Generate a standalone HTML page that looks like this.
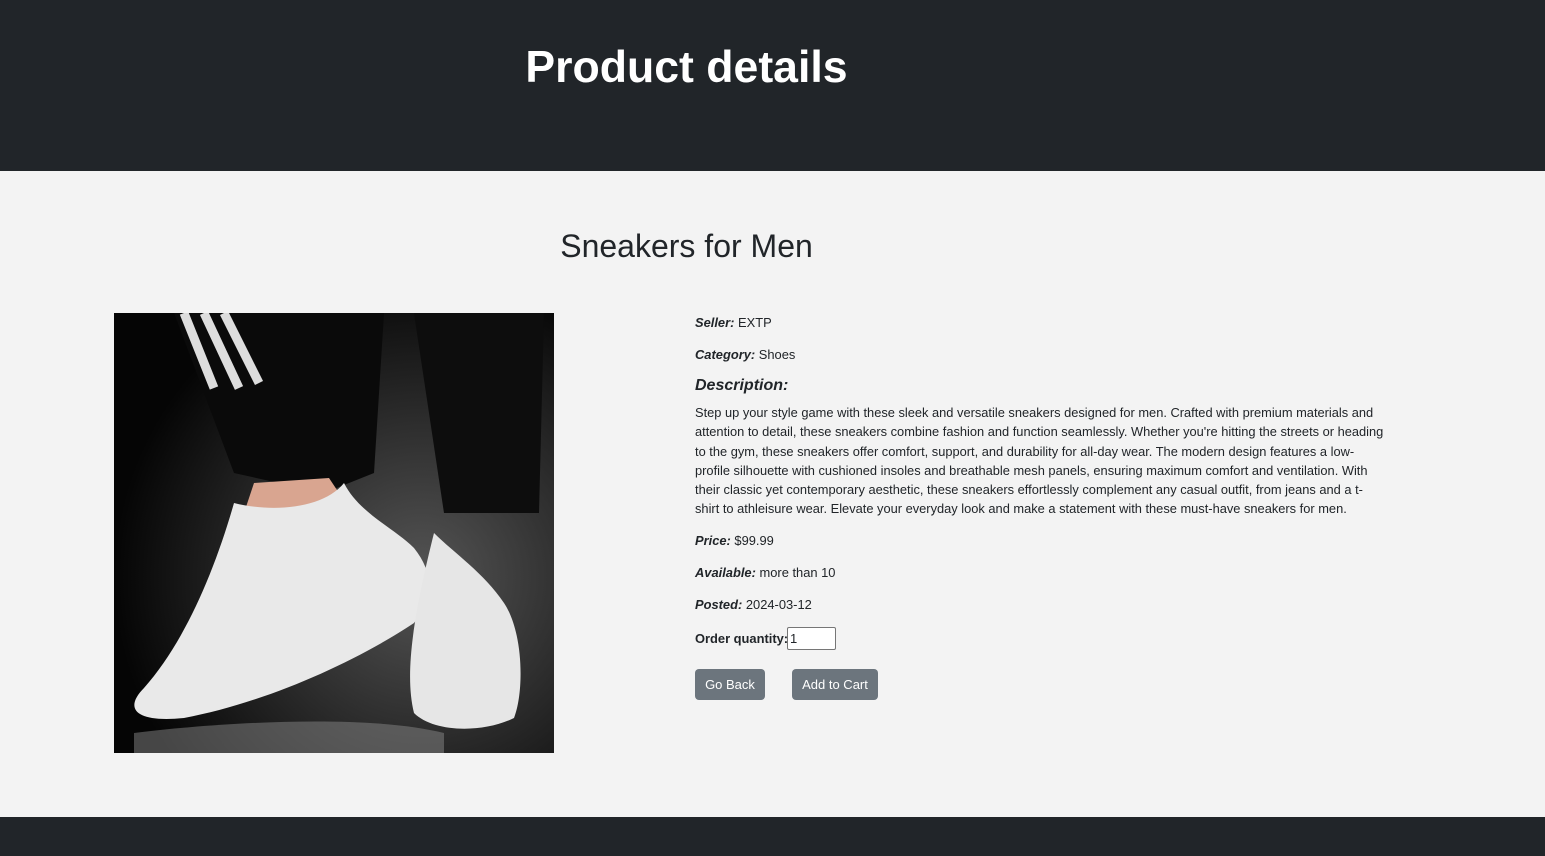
<!DOCTYPE html>
<html><head><style>
body{margin:0;background:#f3f3f3;font-family:"Liberation Sans",sans-serif;color:#212529;width:1545px;height:856px;overflow:hidden;position:relative}
header{position:absolute;left:0;top:0;width:1545px;height:171px;background:#212529}
header h1{position:absolute;left:0;width:1373px;text-align:center;top:43px;margin:0;color:#fff;font-size:44.6px;font-weight:bold}
h2{position:absolute;left:0;width:1373px;text-align:center;top:228px;margin:0;font-weight:normal;font-size:32px}
.img{position:absolute;left:114px;top:313px;width:440px;height:440px;background:#111;overflow:hidden}
.info{position:absolute;left:695px;top:313px;width:690px;font-size:12.9px;line-height:19.2px}
.info p{margin:0}
b i,i b{font-weight:bold}
.desc{font-size:12.85px;line-height:19.25px}
.btn{position:absolute;top:669px;height:31px;background:#6c757d;color:#fff;border-radius:4px;font-size:13px;line-height:31px;text-align:center}
footer{position:absolute;left:0;top:817px;width:1545px;height:39px;background:#212529}
</style></head><body>
<header><h1>Product details</h1></header>
<h2>Sneakers for Men</h2>
<div class="img"><svg width="440" height="440" viewBox="0 0 440 440">
<defs><radialGradient id="g" cx="0.7" cy="0.6" r="0.7"><stop offset="0" stop-color="#555"/><stop offset="1" stop-color="#050505"/></radialGradient></defs>
<rect width="440" height="440" fill="url(#g)"/>
<path d="M60 0 L270 0 L260 160 L210 180 L120 160 Z" fill="#0a0a0a"/>
<path d="M300 0 L430 0 L425 200 L330 200 Z" fill="#0d0d0d"/>
<path d="M70 0 L100 75 M90 0 L125 75 M110 0 L145 70" stroke="#ddd" stroke-width="9"/>
<path d="M140 170 L215 165 L225 180 L215 200 L130 200 Z" fill="#d9a590"/>
<path d="M120 190 C160 200 210 195 230 170 C245 200 280 215 300 235 C320 260 320 285 300 310 C240 350 150 390 70 405 C20 410 10 395 30 375 C70 330 100 260 120 190Z" fill="#e9e9e9"/>
<path d="M320 220 C340 240 370 260 390 290 C410 320 410 380 400 405 C370 420 320 420 300 400 C290 360 300 300 320 220Z" fill="#e6e6e6"/>
<path d="M20 420 C100 410 250 400 330 420 L330 440 L20 440Z" fill="#888" opacity="0.5"/>
</svg></div>
<div class="info">
<p style="position:absolute;top:0"><b><i>Seller:</i></b> EXTP</p>
<p style="position:absolute;top:32px"><b><i>Category:</i></b> Shoes</p>
<p style="position:absolute;top:63px;font-size:16px;font-weight:bold;font-style:italic">Description:</p>
<p class="desc" style="position:absolute;top:90px;width:690px">Step up your style game with these sleek and versatile sneakers designed for men. Crafted with premium materials and attention to detail, these sneakers combine fashion and function seamlessly. Whether you're hitting the streets or heading to the gym, these sneakers offer comfort, support, and durability for all-day wear. The modern design features a low-profile silhouette with cushioned insoles and breathable mesh panels, ensuring maximum comfort and ventilation. With their classic yet contemporary aesthetic, these sneakers effortlessly complement any casual outfit, from jeans and a t-shirt to athleisure wear. Elevate your everyday look and make a statement with these must-have sneakers for men.</p>
<p style="position:absolute;top:218px"><b><i>Price:</i></b> $99.99</p>
<p style="position:absolute;top:250px;white-space:nowrap"><b><i>Available:</i></b> more than 10</p>
<p style="position:absolute;top:282px"><b><i>Posted:</i></b> 2024-03-12</p>
<p style="position:absolute;top:316px;white-space:nowrap"><b>Order quantity:</b></p>
</div>
<div style="position:absolute;left:787px;top:627px;height:21px;background:#fff;border:1px solid #767676;border-radius:2px;font-size:13px;line-height:21px;padding-left:2px;width:45px">1</div>
<div class="btn" style="left:695px;width:70px">Go Back</div>
<div class="btn" style="left:792px;width:86px">Add to Cart</div>
<footer></footer>
</body></html>
